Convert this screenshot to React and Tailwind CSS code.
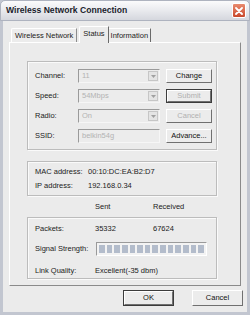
import React from 'react';

const font = "font-['Liberation_Sans',Arial,sans-serif]";

function Combo({ value, input }) {
  return (
    <div className="w-[82px] h-[14px] flex items-center border border-t-[#9a9a9a] border-l-[#9a9a9a] border-b-[#f6f6f6] border-r-[#f6f6f6] bg-[#ececec]">
      <span className="flex-1 pl-[3px] text-[7.5px] leading-none text-[#b3b3b3]">{value}</span>
      {!input && (
        <span className="w-[10px] h-[10px] mr-[1px] flex items-center justify-center border border-[#c6c6c6] bg-[#e4e4e4]">
          <svg width="5" height="3" viewBox="0 0 5 3"><path d="M0 0h5L2.5 3z" fill="#a0a0a0" /></svg>
        </span>
      )}
    </div>
  );
}

function Btn({ children, disabled, def, w = 'w-[46px]', h = 'h-[14px]' }) {
  return (
    <div className={`${w} ${h} flex ${def ? 'border border-[#3c3c3c]' : ''}`}>
      <div className="flex-1 flex items-center justify-center border border-t-white border-l-white border-b-[#707070] border-r-[#707070] bg-[#ececec]">
        <span className={`text-[7.5px] leading-none ${disabled ? 'text-[#b0b0b0]' : 'text-[#111]'}`}>{children}</span>
      </div>
    </div>
  );
}

function Row({ label, value, button, disabled, def, input }) {
  return (
    <div className="flex items-center h-[14px]">
      <span className="w-[43px] text-[7.5px] leading-none text-[#222]">{label}</span>
      <Combo value={value} input={input} />
      <div className="ml-[6px]">
        <Btn disabled={disabled} def={def}>{button}</Btn>
      </div>
    </div>
  );
}

function Group({ children, className }) {
  return (
    <div className={`w-[190px] border border-[#bcbcbc] shadow-[inset_1px_1px_0_#fafafa,1px_1px_0_#fafafa] ${className}`}>
      {children}
    </div>
  );
}

export default function App() {
  const segs = Array.from({ length: 14 });
  return (
    <div className={`w-[250px] h-[315px] flex flex-col bg-[#c2c6d0] ${font}`}>
      {/* Title bar */}
      <div className="h-[21px] flex items-center justify-between pl-[5px] pr-[3px] bg-gradient-to-b from-[#fbfbfc] via-[#e9eaee] to-[#d5d7de] rounded-t-[5px] border border-[#aeb3bf]">
        <span className="text-[8.6px] font-bold text-[#1b1d2c]">Wireless Network Connection</span>
        <div className="w-[14px] h-[15px] rounded-[2px] border border-white bg-gradient-to-b from-[#e88a6e] to-[#c9472b] flex items-center justify-center">
          <svg width="8" height="8" viewBox="0 0 8 8">
            <path d="M1 1l6 6M7 1L1 7" stroke="white" strokeWidth="1.8" strokeLinecap="round" />
          </svg>
        </div>
      </div>

      {/* Body */}
      <div className="flex-1 mx-[3px] mb-[3px] bg-[#ebebeb] flex flex-col">
        {/* Tabs */}
        <div className="flex items-end pl-[8px] pt-[4px] h-[21px]">
          <div className="h-[14px] px-[3px] flex items-center border-t border-l border-t-white border-l-white border-r border-r-[#8d8d8d] rounded-tl-[2px] bg-[#ececec]">
            <span className="text-[7.5px] leading-none text-[#222]">Wireless Network</span>
          </div>
          <div className="h-[17px] -mb-[1px] ml-[2px] px-[3px] flex items-start pt-[3px] border-t border-l border-t-white border-l-white border-r border-r-[#6a6a6a] rounded-tl-[2px] bg-[#ebebeb] z-10">
            <span className="text-[7.5px] leading-none text-[#222]">Status</span>
          </div>
          <div className="h-[14px] px-[2px] flex items-center border-t border-t-white border-r border-r-[#6a6a6a] bg-[#ececec]">
            <span className="text-[7.5px] leading-none text-[#222]">Information</span>
          </div>
        </div>

        {/* Panel */}
        <div className="ml-[6px] w-[232px] h-[244px] border border-t-white border-l-white border-b-[#8a8a8a] border-r-[#8a8a8a] bg-[#ebebeb] pl-[17px] pt-[18px] flex flex-col">
          <Group className="h-[89px] pt-[7px] pl-[7px] flex flex-col gap-[6px]">
            <Row label="Channel:" value="11" button="Change" />
            <Row label="Speed:" value="54Mbps" button="Submit" disabled def />
            <Row label="Radio:" value="On" button="Cancel" disabled />
            <Row label="SSID:" value="belkin54g" button="Advance..." input />
          </Group>

          <Group className="mt-[11px] h-[35px] pl-[7px] flex flex-col justify-center gap-[7px]">
            <div className="flex text-[7.5px] leading-none text-[#222]">
              <span className="w-[53px]">MAC address:</span>
              <span>00:10:DC:EA:B2:D7</span>
            </div>
            <div className="flex text-[7.5px] leading-none text-[#222]">
              <span className="w-[53px]">IP address:</span>
              <span>192.168.0.34</span>
            </div>
          </Group>

          <div className="h-[21px] flex items-center text-[7.5px] leading-none text-[#222] pl-[68px]">
            <span className="w-[58px]">Sent</span>
            <span>Received</span>
          </div>

          <Group className="h-[62px] pl-[7px] pt-[7px] flex flex-col">
            <div className="flex h-[8px] items-center text-[7.5px] leading-none text-[#222]">
              <span className="w-[60px]">Packets:</span>
              <span className="w-[58px]">35332</span>
              <span>67624</span>
            </div>
            <div className="flex mt-[9px] items-center text-[7.5px] leading-none text-[#222]">
              <span className="w-[61px]">Signal Strength:</span>
              <div className="w-[111px] h-[14px] border border-t-[#9a9a9a] border-l-[#9a9a9a] border-b-white border-r-white bg-[#f3f3f3] flex gap-[2px] px-[2px] py-[2px]">
                {segs.map((_, i) => (
                  <div key={i} className="flex-1 bg-[#b3bccb]" />
                ))}
              </div>
            </div>
            <div className="flex mt-[11px] items-center text-[7.5px] leading-none text-[#222]">
              <span className="w-[60px]">Link Quality:</span>
              <span>Excellent(-35 dbm)</span>
            </div>
          </Group>
        </div>

        {/* Footer buttons */}
        <div className="flex justify-end gap-[18px] pr-[4px] mt-[4px]">
          <Btn def w="w-[51px]" h="h-[16px]">OK</Btn>
          <Btn w="w-[51px]" h="h-[16px]">Cancel</Btn>
        </div>
      </div>
    </div>
  );
}
